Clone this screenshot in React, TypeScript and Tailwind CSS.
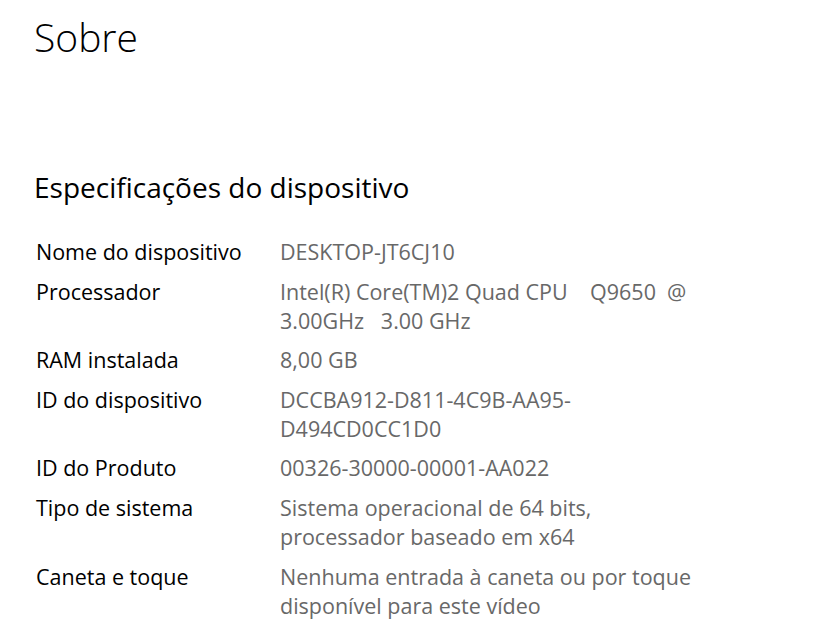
const specs: [string, string[]][] = [
  ["Nome do dispositivo", ["DESKTOP-JT6CJ10"]],
  ["Processador", ["Intel(R) Core(TM)2 Quad CPU\u00a0\u00a0\u00a0\u00a0Q9650\u00a0\u00a0@", "3.00GHz\u00a0\u00a0\u00a03.00 GHz"]],
  ["RAM instalada", ["8,00 GB"]],
  ["ID do dispositivo", ["DCCBA912-D811-4C9B-AA95-", "D494CD0CC1D0"]],
  ["ID do Produto", ["00326-30000-00001-AA022"]],
  ["Tipo de sistema", ["Sistema operacional de 64 bits,", "processador baseado em x64"]],
  ["Caneta e toque", ["Nenhuma entrada à caneta ou por toque", "disponível para este vídeo"]],
];

export default function App() {
  return (
    <div
      className="w-[822px] h-[629px] overflow-hidden bg-white pl-[34px] pt-[10px] text-black"
      style={{ fontFamily: '"Open Sans", "Noto Sans", sans-serif' }}
    >
      <h1 className="text-[39px] leading-[54px] font-light">Sobre</h1>
      <h2 className="mt-[104px] text-[28px] leading-[38px] font-normal">Especificações do dispositivo</h2>
      <div className="mt-[31px] flex flex-col gap-[10.6px] pl-[2px] text-[21.5px] leading-[29px]">
        {specs.map(([label, lines]) => (
          <div key={label} className="grid grid-cols-[244px_1fr]">
            <div>{label}</div>
            <div className="text-[#686868]">
              {lines.map((l) => (
                <div key={l}>{l}</div>
              ))}
            </div>
          </div>
        ))}
      </div>
    </div>
  );
}
